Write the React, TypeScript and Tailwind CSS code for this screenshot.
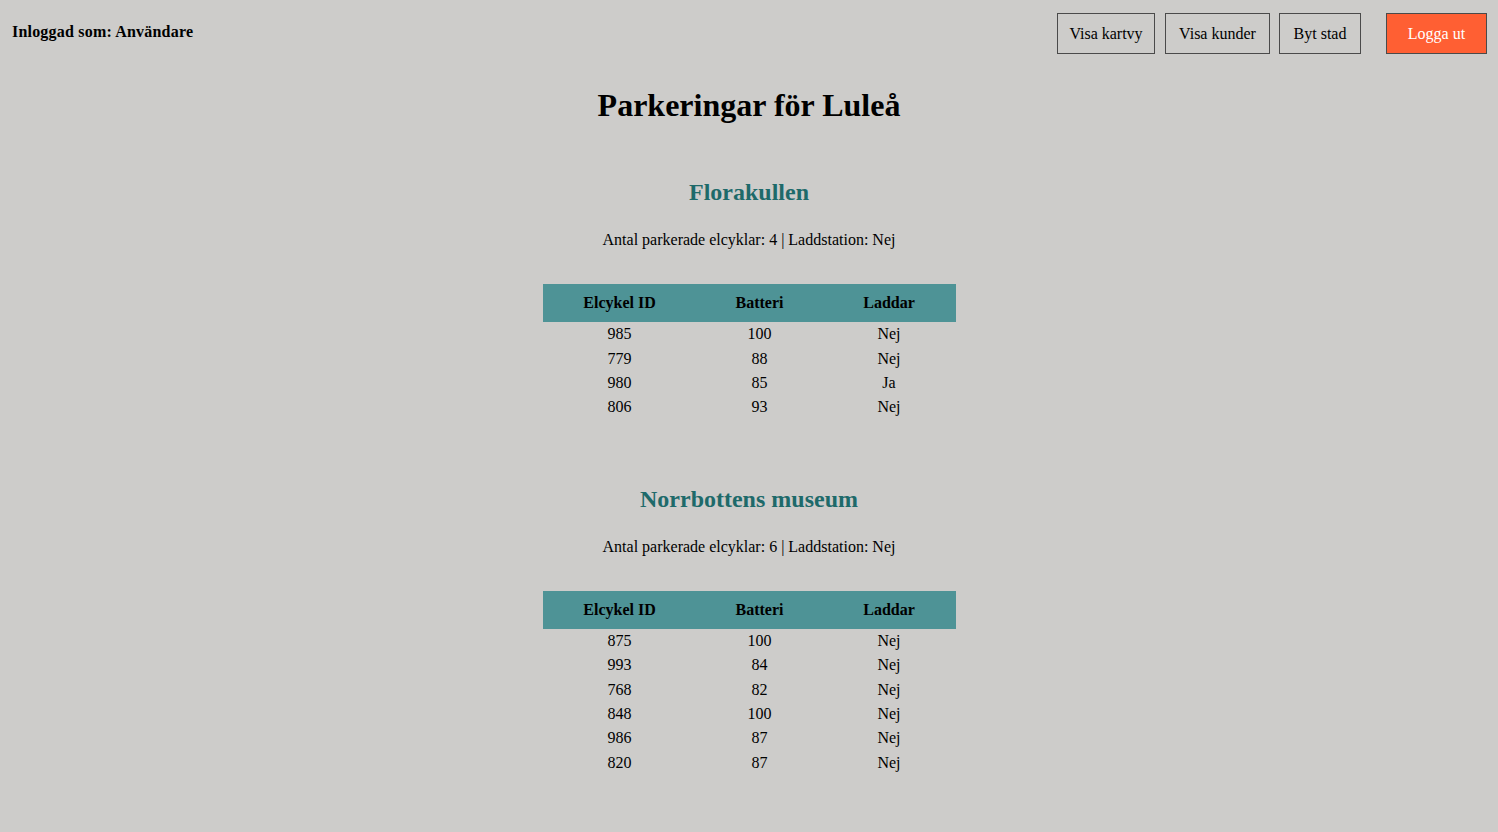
const parkings = [
  {
    name: "Florakullen",
    count: 4,
    charging: "Nej",
    bikes: [
      { id: 985, battery: 100, charging: "Nej" },
      { id: 779, battery: 88, charging: "Nej" },
      { id: 980, battery: 85, charging: "Ja" },
      { id: 806, battery: 93, charging: "Nej" },
    ],
  },
  {
    name: "Norrbottens museum",
    count: 6,
    charging: "Nej",
    bikes: [
      { id: 875, battery: 100, charging: "Nej" },
      { id: 993, battery: 84, charging: "Nej" },
      { id: 768, battery: 82, charging: "Nej" },
      { id: 848, battery: 100, charging: "Nej" },
      { id: 986, battery: 87, charging: "Nej" },
      { id: 820, battery: 87, charging: "Nej" },
    ],
  },
];

const NavButton = ({ label, className }: { label: string; className: string }) => (
  <button
    className={`h-[41px] border border-[#4a4a4a] bg-transparent text-[16px] text-black ${className}`}
  >
    {label}
  </button>
);

const App = () => {
  return (
    <div className="min-h-screen bg-[#cdccca] text-black font-['Liberation_Serif','Times_New_Roman',serif] pb-12">
      <div className="flex justify-between items-start pl-[12px] pr-[11px] pt-[13px]">
        <div className="pt-[10px] text-[16px] leading-[18px] font-bold tracking-[0.2px]">
          Inloggad som: Användare
        </div>
        <div className="flex items-center">
          <NavButton label="Visa kartvy" className="w-[98px]" />
          <NavButton label="Visa kunder" className="ml-[10px] w-[105px]" />
          <NavButton label="Byt stad" className="ml-[9px] w-[82px]" />
          <button className="ml-[25px] h-[41px] w-[101px] border border-[#4a4a4a] bg-[#ff5f33] text-white text-[16px]">
            Logga ut
          </button>
        </div>
      </div>

      <h1 className="mt-[33px] text-center text-[32px] leading-[37px] font-bold">
        Parkeringar för Luleå
      </h1>

      {parkings.map((p, i) => (
        <section key={p.name} className={i === 0 ? "mt-[54px]" : "mt-[65px]"}>
          <h2 className="text-center text-[24px] leading-[28px] font-bold text-[#1e6a6a]">
            {p.name}
          </h2>
          <p className="mt-[25px] text-center text-[16px] leading-[18px]">
            Antal parkerade elcyklar: {p.count} | Laddstation: {p.charging}
          </p>
          <table className="mx-auto mt-[35px] border-collapse text-[16px]">
            <thead>
              <tr className="bg-[#4e9396] h-[38px]">
                <th className="w-[154px] font-bold">Elcykel ID</th>
                <th className="w-[126px] font-bold">Batteri</th>
                <th className="w-[133px] font-bold">Laddar</th>
              </tr>
            </thead>
            <tbody>
              {p.bikes.map((b) => (
                <tr key={b.id} className="h-[24.4px] text-center leading-[18px]">
                  <td>{b.id}</td>
                  <td>{b.battery}</td>
                  <td>{b.charging}</td>
                </tr>
              ))}
            </tbody>
          </table>
        </section>
      ))}
    </div>
  );
};

export default App;
